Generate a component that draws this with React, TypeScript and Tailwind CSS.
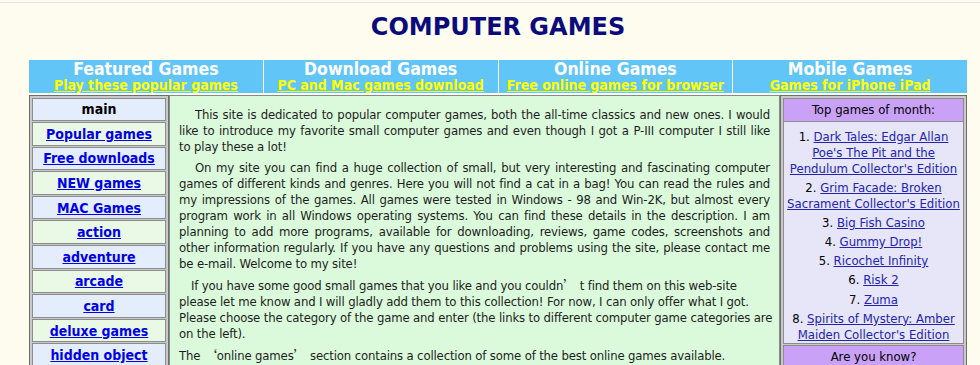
import React from "react";

const tabs = [
  { title: "Featured Games", sub: "Play these popular games" },
  { title: "Download Games", sub: "PC and Mac games download" },
  { title: "Online Games", sub: "Free online games for browser" },
  { title: "Mobile Games", sub: "Games for iPhone iPad" },
];

const navItems = [
  "Popular games",
  "Free downloads",
  "NEW games",
  "MAC Games",
  "action",
  "adventure",
  "arcade",
  "card",
  "deluxe games",
  "hidden object",
  "mahjong",
  "puzzle",
];

const topGames = [
  ["Dark Tales: Edgar Allan", "Poe's The Pit and the", "Pendulum Collector's Edition"],
  ["Grim Facade: Broken", "Sacrament Collector's Edition"],
  ["Big Fish Casino"],
  ["Gummy Drop!"],
  ["Ricochet Infinity"],
  ["Risk 2"],
  ["Zuma"],
  ["Spirits of Mystery: Amber", "Maiden Collector's Edition"],
];

// one justified line of a paragraph
const Line = ({ children, indent }: { children: React.ReactNode; indent?: boolean }) => (
  <span className={`block [text-align-last:justify] ${indent ? "indent-4" : ""}`}>{children}</span>
);

// full-width quote as the original page renders it
const Q = ({ children }: { children: React.ReactNode }) => (
  <span className="font-['Noto_Sans_CJK_SC',sans-serif]">{children}</span>
);

const App = () => {
  return (
    <div className="h-screen overflow-hidden bg-[#fdfcef] pt-[2px] font-['DejaVu_Sans_Condensed','DejaVu_Sans',sans-serif] text-[13px] text-[#1e1e1e]">
      <div className="h-px bg-[#e4e4e4]" />
      <div className="ml-[29px] w-[938px]">
        <h1 className="mt-[10px] text-center font-['DejaVu_Sans',sans-serif] text-[24px] font-bold leading-[28px] text-[#0b0b7c]">
          COMPUTER GAMES
        </h1>

        <div className="mt-[19px] grid h-[33px] grid-cols-4 gap-px">
          {tabs.map((t) => (
            <a key={t.title} href="#" className="flex flex-col items-center bg-[#62c5f8] pt-px font-bold">
              <span className="text-[17.5px] leading-[16px] text-white">{t.title}</span>
              <span className="text-[14px] leading-[16px] text-[#ffff00] underline">{t.sub}</span>
            </a>
          ))}
        </div>

        <div className="mt-[1.5px] flex items-start">
          <div className="flex w-[140px] shrink-0 flex-col gap-px border border-[#6e6e6e] bg-[#c9c9c9] p-[2px]">
            <div className="flex h-[23.6px] items-center justify-center border border-[#8c8c8c] bg-[#e3edfb] pt-px text-[14px] font-bold text-black">
              main
            </div>
            {navItems.map((item, i) => (
              <a
                key={item}
                href="#"
                className={`flex h-[23.6px] items-center justify-center border border-[#8c8c8c] pt-px text-[14px] font-bold text-[#0000e6] underline ${
                  i % 2 === 0 ? "bg-[#eaf8e6]" : "bg-[#e3edfb]"
                }`}
              >
                {item}
              </a>
            ))}
          </div>

          <div className="h-[300px] min-w-0 flex-1 border border-[#8a8a8a] bg-[#dbf9db] px-[9px] pt-[11px] leading-[16px] tracking-[-0.15px]">
            <p>
              <Line indent>This site is dedicated to popular computer games, both the all-time classics and new ones. I would</Line>
              <Line>like to introduce my favorite small computer games and even though I got a P-III computer I still like</Line>
              <span className="block">to play these a lot!</span>
            </p>
            <p className="mt-[5px]">
              <Line indent>On my site you can find a huge collection of small, but very interesting and fascinating computer</Line>
              <Line>games of different kinds and genres. Here you will not find a cat in a bag! You can read the rules and</Line>
              <Line>my impressions of the games. All games were tested in Windows - 98 and Win-2K, but almost every</Line>
              <Line>program work in all Windows operating systems. You can find these details in the description. I am</Line>
              <Line>planning to add more programs, available for downloading, reviews, game codes, screenshots and</Line>
              <Line>other information regularly. If you have any questions and problems using the site, please contact me</Line>
              <span className="block">be e-mail. Welcome to my site!</span>
            </p>
            <p className="mt-[5px] whitespace-nowrap indent-3">
              If you have some good small games that you like and you couldn<Q>’</Q> t find them on this web-site
              <br />
              please let me know and I will gladly add them to this collection! For now, I can only offer what I got.
              <br />
              Please choose the category of the game and enter (the links to different computer game categories are
              <br />
              on the left).
            </p>
            <p className="mt-[5px]">
              The <Q>‘</Q>online games<Q>’</Q> section contains a collection of some of the best online games available.
            </p>
          </div>

          <div className="w-[187px] shrink-0 border border-[#6e6e6e] bg-[#c9c9c9] p-[2px]">
            <div className="flex h-[24px] items-center justify-center border border-[#8c8c8c] bg-[#c9a2f7] pt-px text-black">
              Top games of month:
            </div>
            <ol className="flex flex-col gap-[3.2px] border-x border-b border-[#8c8c8c] bg-[#e6e6f8] pt-[7px] pb-0 text-center leading-[16px] text-black">
              {topGames.map((lines, i) => (
                <li key={lines[0]}>
                  {i + 1}.{" "}
                  <a href="#" className="text-[#2323b0] underline">
                    {lines.map((l, j) => (
                      <React.Fragment key={l}>
                        {j > 0 && <br />}
                        {l}
                      </React.Fragment>
                    ))}
                  </a>
                </li>
              ))}
            </ol>
            <div className="mt-px flex h-[24px] items-center justify-center border border-[#8c8c8c] bg-[#c9a2f7] text-black">
              Are you know?
            </div>
          </div>
        </div>
      </div>
    </div>
  );
};

export default App;
